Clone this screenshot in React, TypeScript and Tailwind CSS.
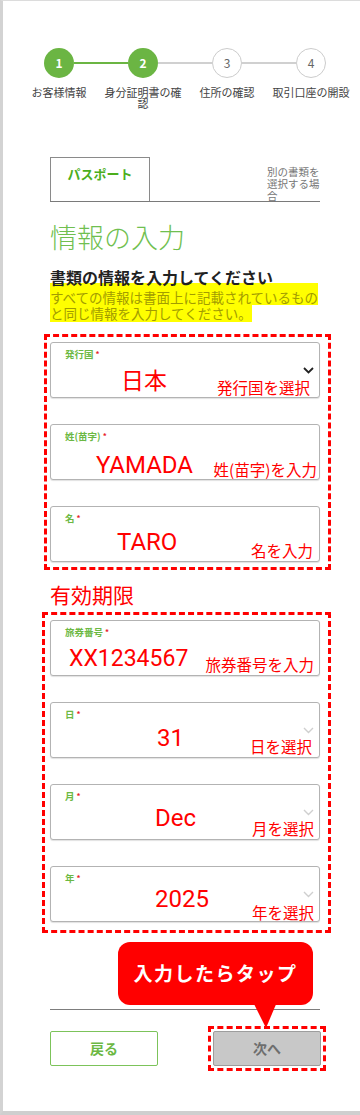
type Field = {
    label: string;
    value: string;
    valueCls: string;
    note: string;
    noteCls: string;
    chevron?: "dark" | "light";
};

const steps = [
    { n: "1", label: "お客様情報", done: true },
    { n: "2", label: "身分証明書の確認", done: true },
    { n: "3", label: "住所の確認", done: false },
    { n: "4", label: "取引口座の開設", done: false },
];

const nameFields: Field[] = [
    { label: "発行国", value: "日本", valueCls: "left-[70px] top-[27px] text-[23px]", note: "発行国を選択", noteCls: "right-[9px] top-[36px]", chevron: "dark" },
    { label: "姓(苗字)", value: "YAMADA", valueCls: "left-[45px] top-[28px] text-[24px]", note: "姓(苗字)を入力", noteCls: "right-[2px] top-[36px]" },
    { label: "名", value: "TARO", valueCls: "left-[66px] top-[23px] text-[24px]", note: "名を入力", noteCls: "right-[6px] top-[35px]" },
];

const expiryFields: Field[] = [
    { label: "旅券番号", value: "XX1234567", valueCls: "left-[18px] top-[26px] text-[23px]", note: "旅券番号を入力", noteCls: "right-[5px] top-[35px]" },
    { label: "日", value: "31", valueCls: "left-[106px] top-[23px] text-[24px]", note: "日を選択", noteCls: "right-[7px] top-[35px]", chevron: "light" },
    { label: "月", value: "Dec", valueCls: "left-[104px] top-[21px] text-[24px]", note: "月を選択", noteCls: "right-[5px] top-[35px]", chevron: "light" },
    { label: "年", value: "2025", valueCls: "left-[104px] top-[20px] text-[24px]", note: "年を選択", noteCls: "right-[5px] top-[37px]", chevron: "light" },
];

const Chevron = ({ dark }: { dark: boolean }) => (
    <svg className="absolute right-[5px] top-[24px]" width="11" height="7" viewBox="0 0 11 7">
        <path d="M1 1l4.5 4.5L10 1" fill="none" stroke={dark ? "#222" : "#cfcfcf"} strokeWidth={dark ? 1.8 : 1.4} />
    </svg>
);

const FieldBox = ({ f }: { f: Field }) => (
    <div className="relative h-[56px] w-[270px] rounded-[3px] border border-[#b3b3b3] bg-white shadow-[0_1px_1px_rgba(0,0,0,0.12)]">
        <span className="absolute left-[14px] top-[5px] text-[9.5px] leading-[12px] font-bold text-[#6cb843]">
            {f.label}
            <span className="ml-[2px] align-top text-[8px] text-[#e8202a]">*</span>
        </span>
        {f.chevron && <Chevron dark={f.chevron === "dark"} />}
        <span className={`absolute leading-none text-[#ff0000] font-['Roboto','Noto_Sans_CJK_JP',sans-serif] ${f.valueCls}`}>{f.value}</span>
        <span className={`absolute text-[15.5px] leading-[16px] text-[#ff0000] whitespace-nowrap ${f.noteCls}`}>{f.note}</span>
    </div>
);

export default function App() {
    return (
        <div className="relative h-[1115px] w-[360px] overflow-hidden border-t border-l-[3px] border-b-[4px] border-t-[#dcdcdc] border-l-[#d3d3d3] border-b-[#cfcfcf] bg-white font-['Noto_Sans_CJK_JP',sans-serif] text-[#333]">
            {/* stepper */}
            <div className="ml-[41px] mt-[47px] flex items-center">
                {steps.map((s, i) => (
                    <div key={s.n} className="flex items-center">
                        <div className={`flex h-[30px] w-[30px] items-center justify-center rounded-full text-[12px] ${s.done ? "bg-[#6bb543] font-bold text-white" : "border border-[#cccccc] bg-white text-[#666]"}`}>
                            {s.n}
                        </div>
                        {i < 3 && <div className={`h-[2px] w-[54px] ${i === 0 ? "bg-[#6bb543]" : "bg-[#d0d0d0]"}`} />}
                    </div>
                ))}
            </div>
            <div className="ml-[14px] mt-[9px] flex">
                {steps.map((s) => (
                    <div key={s.n} className="w-[84px] text-center text-[11px] leading-[11px] text-[#444]">{s.label}</div>
                ))}
            </div>

            <div className="pl-[47px] pr-[40px]">
                {/* tabs */}
                <div className="mt-[48px] flex h-[45px] justify-between border-b border-[#7a7a7a]">
                    <div className="h-[44px] w-[100px] border border-b-0 border-[#8a8a8a] pt-[8px] text-center text-[13px] leading-[16px] font-bold text-[#4cae1c]">
                        パスポート
                    </div>
                    <div className="mt-[9px] w-[53px] text-[10.5px] leading-[12px] text-[#777]">別の書類を選択する場合</div>
                </div>

                <h1 className="mt-[19px] text-[27px] leading-[32px] font-light text-[#70bf50]">情報の入力</h1>
                <p className="relative z-10 mt-[14px] text-[16px] leading-[20px] font-bold text-[#222]">書類の情報を入力してください</p>
                <div className="-mt-[4px] text-[13.5px] leading-[16px] text-[#a29c00]">
                    <span className="block w-fit bg-[#ffff00] pt-[6px] whitespace-nowrap">すべての情報は書面上に記載されているもの</span>
                    <span className="block w-fit bg-[#ffff00] pb-[1px] whitespace-nowrap">と同じ情報を入力してください。</span>
                </div>

                <div className="-ml-[6px] mt-[12px] flex w-[287px] flex-col gap-[26px] border-[3px] border-dashed border-[#ff0000] pt-[5px] pr-[8px] pb-[5px] pl-[3px]">
                    {nameFields.map((f) => <FieldBox key={f.label} f={f} />)}
                </div>

                <h2 className="mt-[12px] text-[21px] leading-[24px] text-[#ff0000]">有効期限</h2>

                <div className="-ml-[8px] mt-[6px] flex w-[289px] flex-col gap-[26px] border-[3px] border-dashed border-[#ff0000] pt-[5px] pr-[8px] pb-[8px] pl-[5px]">
                    {expiryFields.map((f) => <FieldBox key={f.label} f={f} />)}
                </div>

                <div className="mt-[76px] border-t border-[#7d7d7d]" />

                <div className="-mr-[6px] mt-[16px] flex items-center justify-between">
                    <button className="h-[35px] w-[108px] rounded-[2px] border border-[#7cc35a] bg-white text-[14px] font-bold text-[#6cb843]">戻る</button>
                    <div className="border-[3px] border-dashed border-[#ff0000] p-[2px]">
                        <button className="h-[35px] w-[108px] rounded-[2px] border border-[#9d9d9d] bg-[#c8c8c8] text-[14px] font-bold text-[#6e6e6e]">次へ</button>
                    </div>
                </div>
            </div>

            {/* callout */}
            <div className="absolute left-[115px] top-[941px] h-[63px] w-[195px]">
                <div className="flex h-full w-full items-center justify-center rounded-[12px] bg-[#ff0000] text-[19px] font-bold tracking-[1.5px] text-white">
                    入力したらタップ
                </div>
                <svg className="absolute left-[130px] top-[60px]" width="30" height="28" viewBox="0 0 30 28">
                    <polygon points="5,0 29,0 18,26" fill="#ff0000" />
                </svg>
            </div>
        </div>
    );
}
